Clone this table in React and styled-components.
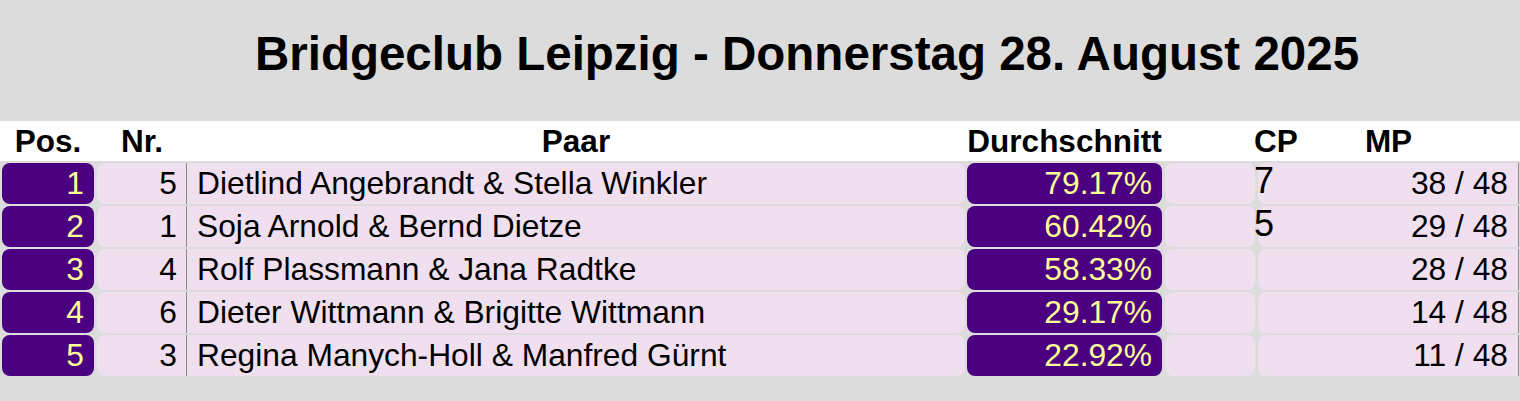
import React from "react";
import styled, { createGlobalStyle, css } from "styled-components";

const GlobalStyle = createGlobalStyle`
  html, body {
    margin: 0;
    padding: 0;
    background: #dcdcdc;
  }
  body {
    font-family: "Liberation Sans", Arial, sans-serif;
    color: #000;
  }
`;

const rows = [
  { pos: 1, nr: 5, pair: "Dietlind Angebrandt & Stella Winkler", avg: "79.17%", cp: "7", mp: "38 / 48" },
  { pos: 2, nr: 1, pair: "Soja Arnold & Bernd Dietze", avg: "60.42%", cp: "5", mp: "29 / 48" },
  { pos: 3, nr: 4, pair: "Rolf Plassmann & Jana Radtke", avg: "58.33%", cp: "", mp: "28 / 48" },
  { pos: 4, nr: 6, pair: "Dieter Wittmann & Brigitte Wittmann", avg: "29.17%", cp: "", mp: "14 / 48" },
  { pos: 5, nr: 3, pair: "Regina Manych-Holl & Manfred Gürnt", avg: "22.92%", cp: "", mp: "11 / 48" },
];

function App() {
  return (
    <Page>
      <GlobalStyle />
      <TitleBar>
        <Title>Bridgeclub Leipzig - Donnerstag 28. August 2025</Title>
      </TitleBar>

      <HeaderRow>
        <HeadCell col={1}>Pos.</HeadCell>
        <HeadCell col={3}>Nr.</HeadCell>
        <HeadCell col={4}>Paar</HeadCell>
        <HeadCell col={6}>Durchschnitt</HeadCell>
        <HeadCell col={10}>MP</HeadCell>
        <HeadCell col={10} $start>CP</HeadCell>
      </HeaderRow>

      <Body>
        {rows.map((r) => (
          <Row key={r.pos}>
            <DarkCell col={1}>{r.pos}</DarkCell>
            <NrCell>{r.nr}</NrCell>
            <PairCell>{r.pair}</PairCell>
            <DarkCell col={6}>{r.avg}</DarkCell>
            <LightCell col={8} />
            <MpCell>{r.mp}</MpCell>
            {r.cp && <CpValue>{r.cp}</CpValue>}
          </Row>
        ))}
      </Body>
    </Page>
  );
}

// Pos | gap | Nr | Paar | gap | Durchschnitt | gap | (leer) | gap | MP
const columns = css`
  display: grid;
  grid-template-columns: 92px 3px 90px 778px 2px 195px 3px 90px 3px 1fr;
  padding: 0 1px 0 2px;
`;

const Page = styled.div`
  width: 1520px;
  min-height: 401px;
  background: #dcdcdc;
`;

const TitleBar = styled.div`
  height: 121px;
  box-sizing: border-box;
  padding: 30px 0 0 94px;
  text-align: center;
`;

const Title = styled.h1`
  margin: 0;
  font-size: 47.5px;
  line-height: 48px;
  font-weight: bold;
`;

const HeaderRow = styled.div`
  ${columns}
  height: 40px;
  background: #fff;
`;

const HeadCell = styled.div`
  grid-column: ${(p) => p.col};
  grid-row: 1;
  justify-self: ${(p) => (p.$start ? "start" : "center")};
  margin-left: ${(p) => (p.$start ? "-4px" : "0")};
  font-size: 31.5px;
  font-weight: bold;
  line-height: 40px;
  white-space: nowrap;
`;

const Body = styled.div`
  display: flex;
  flex-direction: column;
  gap: 2px;
  padding-top: 2px;
`;

const Row = styled.div`
  ${columns}
  height: 41px;
`;

const cellText = css`
  grid-row: 1;
  font-size: 31.75px;
  line-height: 41px;
  white-space: nowrap;
  box-sizing: border-box;
`;

const DarkCell = styled.div`
  ${cellText}
  grid-column: ${(p) => p.col};
  background: #4b0082;
  color: #ffff99;
  border-radius: 8px;
  text-align: right;
  padding-right: 10px;
`;

const LightCell = styled.div`
  ${cellText}
  grid-column: ${(p) => p.col};
  background: #efdfef;
  border-radius: 8px;
`;

const NrCell = styled.div`
  ${cellText}
  grid-column: 3;
  background: #efdfef;
  border-radius: 8px 0 0 8px;
  border-right: 1px solid #8a8a8a;
  text-align: right;
  padding-right: 9px;
`;

const PairCell = styled.div`
  ${cellText}
  grid-column: 4;
  background: #efdfef;
  border-radius: 0 8px 8px 0;
  padding-left: 10px;
`;

const MpCell = styled.div`
  ${cellText}
  grid-column: 10;
  background: #efdfef;
  border-radius: 8px 0 0 8px;
  border-right: 1px solid #8a8a8a;
  text-align: right;
  padding-right: 10px;
`;

const CpValue = styled.div`
  grid-column: 10;
  grid-row: 1;
  justify-self: start;
  align-self: start;
  margin-left: -4px;
  font-size: 36px;
  line-height: 36px;
`;

export default App;
